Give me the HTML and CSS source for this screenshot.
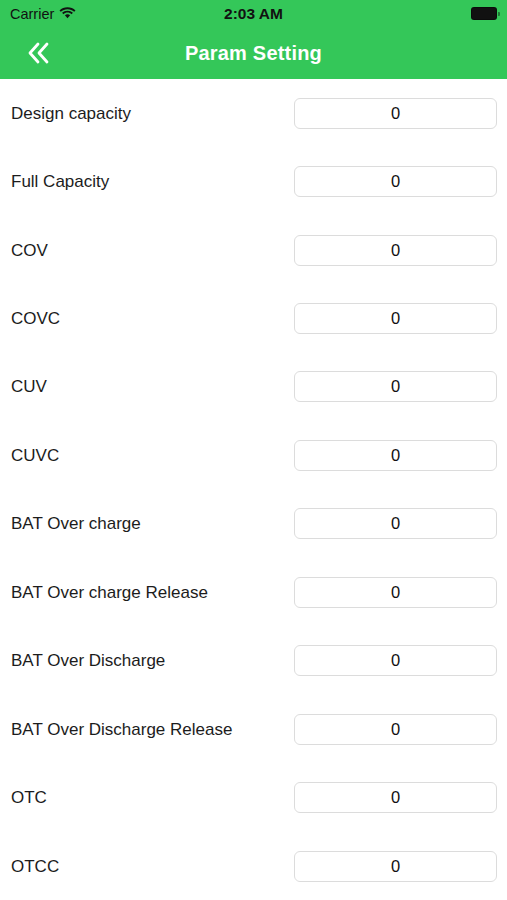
FILE: index.html
```html
<!DOCTYPE html>
<html lang="en">
<head>
    <meta charset="UTF-8">
    <meta name="viewport" content="width=device-width, initial-scale=1.0">
    <title>Param Setting</title>
    <link rel="stylesheet" href="styles.css">
</head>
<body>
    <div class="top">
        <div class="status-bar">
            <div class="carrier">
                Carrier
                <svg class="wifi" width="17" height="12" viewBox="0 0 17 12">
                    <path d="M8.5 2.2c2.6 0 4.9 1 6.7 2.6l1.3-1.4C14.4 1.4 11.6 0.2 8.5 0.2S2.6 1.4 0.5 3.4l1.3 1.4C3.6 3.2 5.9 2.2 8.5 2.2z" fill="#111"/>
                    <path d="M8.5 5.6c1.6 0 3 0.6 4.1 1.6l1.3-1.4C12.5 4.5 10.6 3.7 8.5 3.7S4.5 4.5 3.1 5.8l1.3 1.4C5.5 6.2 6.9 5.6 8.5 5.6z" fill="#111"/>
                    <path d="M8.5 7.2c-1 0-1.9 0.4-2.6 1L8.5 11.2l2.6-3C10.4 7.6 9.5 7.2 8.5 7.2z" fill="#111"/>
                </svg>
            </div>
            <div class="clock">2:03 AM</div>
            <div class="battery">
                <span class="battery-body"></span>
                <span class="battery-cap"></span>
            </div>
        </div>
        <div class="nav-bar">
            <a class="back" href="#">
                <svg width="24" height="22" viewBox="0 0 24 22">
                    <path d="M11 2L3 11l8 9" fill="none" stroke="#fff" stroke-width="2.8" stroke-linecap="round" stroke-linejoin="round"/>
                    <path d="M20 2l-8 9 8 9" fill="none" stroke="#fff" stroke-width="2.8" stroke-linecap="round" stroke-linejoin="round"/>
                </svg>
            </a>
            <h1 class="title">Param Setting</h1>
        </div>
    </div>

    <div class="param-list">
        <div class="param-row">
            <span class="param-label">Design capacity</span>
            <input class="param-input" type="text" value="0">
        </div>
        <div class="param-row">
            <span class="param-label">Full Capacity</span>
            <input class="param-input" type="text" value="0">
        </div>
        <div class="param-row">
            <span class="param-label">COV</span>
            <input class="param-input" type="text" value="0">
        </div>
        <div class="param-row">
            <span class="param-label">COVC</span>
            <input class="param-input" type="text" value="0">
        </div>
        <div class="param-row">
            <span class="param-label">CUV</span>
            <input class="param-input" type="text" value="0">
        </div>
        <div class="param-row">
            <span class="param-label">CUVC</span>
            <input class="param-input" type="text" value="0">
        </div>
        <div class="param-row">
            <span class="param-label">BAT Over charge</span>
            <input class="param-input" type="text" value="0">
        </div>
        <div class="param-row">
            <span class="param-label">BAT Over charge Release</span>
            <input class="param-input" type="text" value="0">
        </div>
        <div class="param-row">
            <span class="param-label">BAT Over Discharge</span>
            <input class="param-input" type="text" value="0">
        </div>
        <div class="param-row">
            <span class="param-label">BAT Over Discharge Release</span>
            <input class="param-input" type="text" value="0">
        </div>
        <div class="param-row">
            <span class="param-label">OTC</span>
            <input class="param-input" type="text" value="0">
        </div>
        <div class="param-row">
            <span class="param-label">OTCC</span>
            <input class="param-input" type="text" value="0">
        </div>
    </div>
</body>
</html>
```

FILE: styles.css
```css
body {
    margin: 0;
    padding: 0;
    width: 507px;
    height: 900px;
    overflow: hidden;
    background: #fff;
    font-family: "Liberation Sans", Arial, sans-serif;
    color: #111;
}

.top {
    background: #34c759;
    height: 79px;
}

.status-bar {
    height: 27px;
    display: flex;
    align-items: center;
    justify-content: space-between;
    padding: 0 7px 0 10px;
    position: relative;
}

.carrier {
    display: flex;
    align-items: center;
    gap: 5px;
    font-size: 14.5px;
    color: #111;
}

.wifi {
    margin-top: -2px;
}

.clock {
    position: absolute;
    left: 0;
    right: 0;
    text-align: center;
    font-size: 15.5px;
    font-weight: 700;
    color: #111;
}

.battery {
    display: flex;
    align-items: center;
    gap: 1px;
}

.battery-body {
    width: 24px;
    height: 11px;
    background: #111;
    border-radius: 3px;
    border: 1px solid rgba(0, 0, 0, 0.35);
}

.battery-cap {
    width: 2px;
    height: 4px;
    background: rgba(0, 0, 0, 0.4);
    border-radius: 0 1px 1px 0;
}

.nav-bar {
    height: 52px;
    display: flex;
    align-items: center;
    justify-content: center;
    position: relative;
}

.back {
    position: absolute;
    left: 27px;
    top: 15px;
    display: block;
}

.title {
    margin: 0;
    font-size: 20px;
    font-weight: 700;
    color: #fff;
    letter-spacing: 0.2px;
}

.param-row {
    height: 68.45px;
    display: flex;
    align-items: center;
    justify-content: space-between;
    padding: 0 10px 0 11px;
}

.param-label {
    font-size: 17px;
    color: #1c1c1c;
    margin-top: 1px;
}

.param-input {
    width: 203px;
    height: 31px;
    box-sizing: border-box;
    border: 1px solid #dcdcdc;
    border-radius: 6px;
    text-align: center;
    font-family: "Liberation Sans", Arial, sans-serif;
    font-size: 16.5px;
    color: #111;
    background: #fff;
    padding: 0;
    outline: none;
}
```
